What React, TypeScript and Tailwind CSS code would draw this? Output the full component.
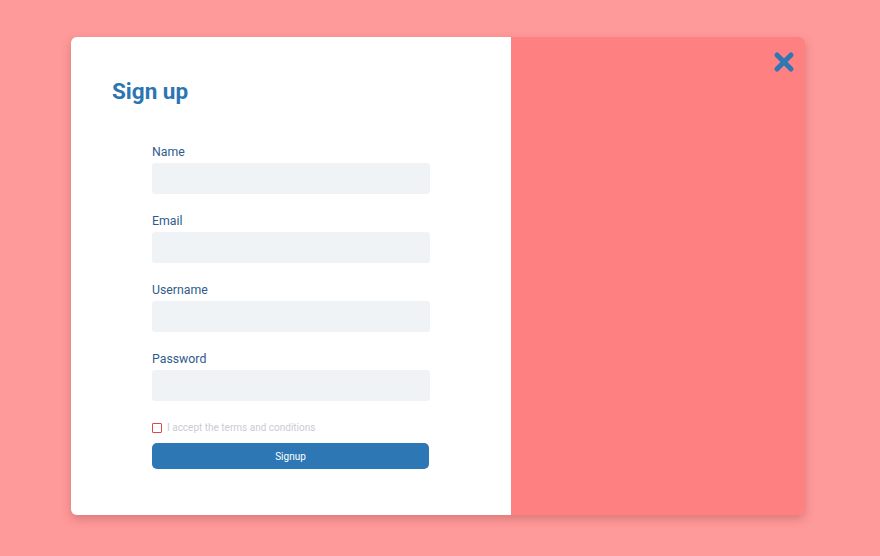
const fields = ['Name', 'Email', 'Username', 'Password']

export default function App() {
  return (
    <div
      className="w-[880px] h-[556px] bg-[#ff9a9a] pt-[37px] pl-[71px]"
      style={{ fontFamily: 'Roboto, "Noto Sans", sans-serif' }}
    >
      <div className="flex w-[734px] h-[478px] rounded-md overflow-hidden shadow-[0_4px_10px_rgba(150,60,60,0.35)]">
        {/* Form side */}
        <div className="w-[440px] bg-white pl-[41px] pt-[38px]">
          <h1 className="text-[22.5px] leading-8 font-bold text-[#2c75b3]">Sign up</h1>

          <form className="ml-[40px] mt-[37px] w-[278px] flex flex-col" onSubmit={(e) => e.preventDefault()}>
            {fields.map((f) => (
              <div key={f} className="mb-[19px]">
                <label className="block text-[12.3px] leading-4 text-[#2f5b8c] mb-[3px]">{f}</label>
                <input
                  type={f === 'Password' ? 'password' : 'text'}
                  className="block w-full h-[31px] bg-[#eff3f6] rounded-[3px] outline-none px-2 text-sm"
                />
              </div>
            ))}

            <label className="flex items-center gap-[5px] mt-[2px]">
              <span className="w-[10px] h-[10px] border border-[#e0464b] rounded-[1px] bg-white" />
              <span className="text-[10px] leading-3 text-[#cacbd5]">I accept the terms and conditions</span>
            </label>

            <button
              type="submit"
              className="mt-[9px] w-[277px] h-[26px] rounded-[5px] bg-[#2d77b4] text-white text-[10px]"
            >
              Signup
            </button>
          </form>
        </div>

        {/* Colour side */}
        <div className="relative flex-1 bg-[#ff8080]">
          <button className="absolute right-[10px] top-[14px] w-[22px] h-[22px]">
            <svg viewBox="0 0 22 22" className="w-[22px] h-[22px]">
              <path d="M4 4 L18 18 M18 4 L4 18" stroke="#2d77b4" strokeWidth="5" strokeLinecap="round" />
            </svg>
          </button>
        </div>
      </div>
    </div>
  )
}
